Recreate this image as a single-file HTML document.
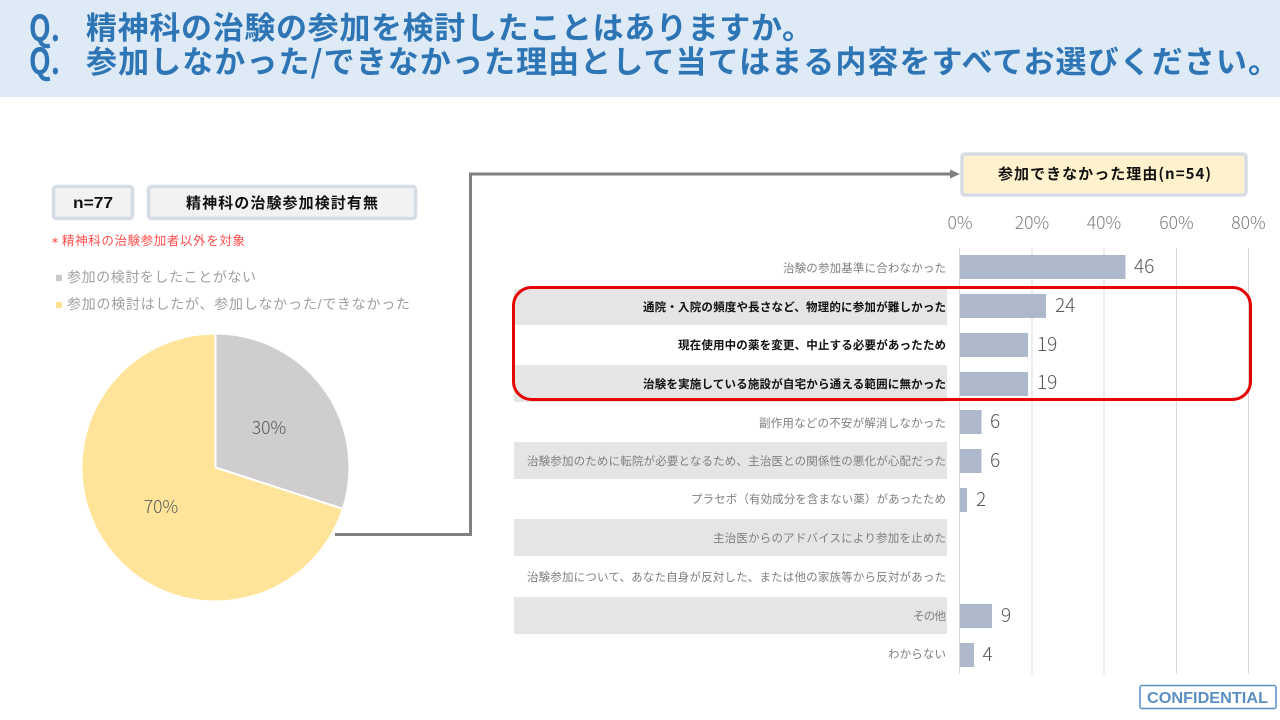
<!DOCTYPE html>
<html lang="ja"><head><meta charset="utf-8"><style>
html,body{margin:0;padding:0;background:#fff;width:1280px;height:720px;overflow:hidden}
svg{display:block}
text{font-family:"Liberation Sans","Noto Sans CJK JP",sans-serif}
.t{font-size:31px;font-weight:700;fill:#2e75b6;font-family:"Noto Sans CJK JP",sans-serif}
.q{font-size:36px;font-weight:700;fill:#2e75b6;font-family:"Noto Sans CJK JP",sans-serif}
.l{font-size:11.5px;fill:#7f7f7f;text-anchor:end}
.b{font-size:11.5px;fill:#111;font-weight:700;text-anchor:end}
.v{font-size:19px;fill:#595959;font-family:"Noto Sans CJK JP",sans-serif;font-weight:300}
.a{font-size:17.500px;fill:#7f7f7f;text-anchor:middle;font-family:"Noto Sans CJK JP",sans-serif;font-weight:300}
.p{font-size:17.500px;fill:#595959;text-anchor:middle;font-family:"Noto Sans CJK JP",sans-serif;font-weight:300}
.g{fill:#e5e5e5}
.bar{fill:#adb9ca}
.grid{stroke:#d9d9d9;stroke-width:1}
</style></head><body>
<svg width="1280" height="720" viewBox="0 0 1280 720" xmlns="http://www.w3.org/2000/svg">
<rect width="1280" height="97" fill="#deeaf6"/>
<text class="q" x="29" y="41" textLength="31" lengthAdjust="spacingAndGlyphs">Q.</text>
<text class="q" x="29" y="74" textLength="31" lengthAdjust="spacingAndGlyphs">Q.</text>
<text class="t" x="86" y="39" textLength="727" lengthAdjust="spacing">精神科の治験の参加を検討したことはありますか。</text>
<text class="t" x="86" y="73" textLength="1193" lengthAdjust="spacing">参加しなかった/できなかった理由として当てはまる内容をすべてお選びください。</text>

<rect x="53.500" y="186.500" width="79" height="32" rx="3" fill="#f2f2f2" stroke="#d6dce5" stroke-width="3.500"/>
<text x="73" y="208" font-size="16" font-weight="700" fill="#111" textLength="40" lengthAdjust="spacingAndGlyphs">n=77</text>
<rect x="148.500" y="186.500" width="267" height="32" rx="3" fill="#f2f2f2" stroke="#d6dce5" stroke-width="3.500"/>
<text x="282" y="208" text-anchor="middle" font-size="15" font-weight="700" fill="#111" textLength="192" lengthAdjust="spacing">精神科の治験参加検討有無</text>
<text x="51" y="243.500" font-size="8" font-weight="700" fill="#ff4b4b" style="font-family:'Noto Sans CJK JP',sans-serif">＊</text>
<text x="62" y="245" font-size="12.500" fill="#ff4b4b" textLength="183" lengthAdjust="spacing">精神科の治験参加者以外を対象</text>

<rect x="56" y="275" width="6" height="6" fill="#c9c9c9"/>
<text x="67" y="282" font-size="14" fill="#a0a0a0" textLength="189" lengthAdjust="spacing">参加の検討をしたことがない</text>
<rect x="56" y="302" width="6" height="6" fill="#ffdf8f"/>
<text x="67" y="309" font-size="14" fill="#a0a0a0" textLength="343" lengthAdjust="spacing">参加の検討はしたが、参加しなかった/できなかった</text>

<path d="M215.500 467.500V333.500A134 134 0 0 1 342.900 508.900Z" fill="#cfcdcd" stroke="#fff" stroke-width="2"/>
<path d="M215.500 467.500L342.900 508.900A134 134 0 1 1 215.500 333.500Z" fill="#ffe499" stroke="#fff" stroke-width="2"/>
<text class="p" x="269" y="434">30%</text>
<text class="p" x="161" y="513">70%</text>

<path d="M335 534.500H470.500V174H952" fill="none" stroke="#7f7f7f" stroke-width="3"/>
<path d="M950 169.500L960 174L950 178.500Z" fill="#7f7f7f"/>

<rect x="962" y="154" width="284" height="41" rx="3" fill="#fff2cc" stroke="#d6dce5" stroke-width="3.500"/>
<text x="998" y="179" font-size="15" font-weight="700" fill="#111" textLength="213" lengthAdjust="spacing" style="font-family:'Noto Sans CJK JP',sans-serif">参加できなかった理由(n=54)</text>

<text class="a" x="960" y="229">0%</text>
<text class="a" x="1032" y="229">20%</text>
<text class="a" x="1104" y="229">40%</text>
<text class="a" x="1176.500" y="229">60%</text>
<text class="a" x="1248.500" y="229">80%</text>

<rect class="g" x="514" y="289" width="433" height="36"/>
<rect class="g" x="514" y="365" width="433" height="37"/>
<rect class="g" x="514" y="442" width="433" height="37"/>
<rect class="g" x="514" y="519" width="433" height="37"/>
<rect class="g" x="514" y="597" width="433" height="37"/>

<g class="grid">
<line x1="959.500" y1="248" x2="959.500" y2="674"/>
<line x1="1032" y1="248" x2="1032" y2="674"/>
<line x1="1104" y1="248" x2="1104" y2="674"/>
<line x1="1176.500" y1="248" x2="1176.500" y2="674"/>
<line x1="1248.500" y1="248" x2="1248.500" y2="674"/>
</g>

<text class="l" x="946" y="272" textLength="163" lengthAdjust="spacing">治験の参加基準に合わなかった</text>
<text class="b" x="946" y="311" textLength="303" lengthAdjust="spacing">通院・入院の頻度や長さなど、物理的に参加が難しかった</text>
<text class="b" x="946" y="349" textLength="268" lengthAdjust="spacing">現在使用中の薬を変更、中止する必要があったため</text>
<text class="b" x="946" y="388" textLength="303" lengthAdjust="spacing">治験を実施している施設が自宅から通える範囲に無かった</text>
<text class="l" x="946" y="427" textLength="187" lengthAdjust="spacing">副作用などの不安が解消しなかった</text>
<text class="l" x="946" y="465" textLength="419" lengthAdjust="spacing">治験参加のために転院が必要となるため、主治医との関係性の悪化が心配だった</text>
<text class="l" x="946" y="503" textLength="255" lengthAdjust="spacing">プラセボ（有効成分を含まない薬）があったため</text>
<text class="l" x="946" y="542" textLength="233" lengthAdjust="spacing">主治医からのアドバイスにより参加を止めた</text>
<text class="l" x="946" y="581" textLength="419" lengthAdjust="spacing">治験参加について、あなた自身が反対した、または他の家族等から反対があった</text>
<text class="l" x="946" y="620" textLength="33" lengthAdjust="spacing">その他</text>
<text class="l" x="946" y="658" textLength="58" lengthAdjust="spacing">わからない</text>

<rect class="bar" x="960" y="255" width="165.500" height="24"/>
<rect class="bar" x="960" y="294" width="86" height="24"/>
<rect class="bar" x="960" y="333" width="68" height="24"/>
<rect class="bar" x="960" y="372" width="68" height="24"/>
<rect class="bar" x="960" y="410" width="21.500" height="24"/>
<rect class="bar" x="960" y="449" width="21.500" height="24"/>
<rect class="bar" x="960" y="488" width="7" height="24"/>
<rect class="bar" x="960" y="604" width="32" height="24"/>
<rect class="bar" x="960" y="643" width="14" height="24"/>

<text class="v" x="1134" y="273">46</text>
<text class="v" x="1055" y="312">24</text>
<text class="v" x="1037" y="351">19</text>
<text class="v" x="1037" y="389">19</text>
<text class="v" x="990" y="428">6</text>
<text class="v" x="990" y="467">6</text>
<text class="v" x="976" y="506">2</text>
<text class="v" x="1001" y="622">9</text>
<text class="v" x="982.500" y="661">4</text>

<rect x="513.500" y="287.500" width="737" height="112" rx="18" fill="none" stroke="#e60000" stroke-width="3"/>

<rect x="1140" y="685.500" width="136" height="23" rx="2" fill="#fff" stroke="#5b8fc4" stroke-width="1.500"/>
<text x="1147" y="703" font-size="16" font-weight="700" fill="#5b8fc4" textLength="121" lengthAdjust="spacingAndGlyphs">CONFIDENTIAL</text>
</svg>
</body></html>
